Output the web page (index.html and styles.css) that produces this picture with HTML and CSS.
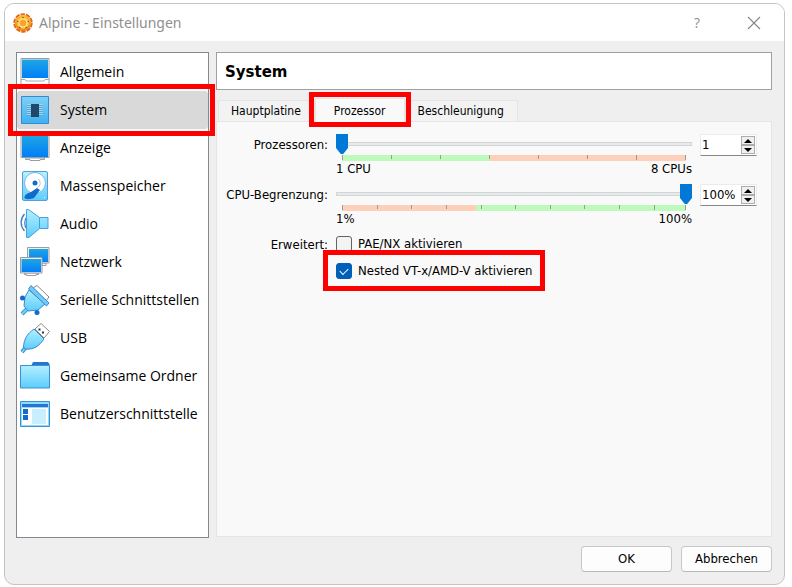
FILE: index.html
```html
<!DOCTYPE html>
<html lang="de">
<head>
<meta charset="utf-8">
<meta name="viewport" content="width=device-width, initial-scale=1">
<title>Alpine - Einstellungen</title>
<link rel="stylesheet" href="styles.css">
</head>
<body>
<svg class="defs" width="0" height="0" aria-hidden="true">
  <defs>
    <linearGradient id="screen" x1="0" y1="0" x2="0" y2="1"><stop offset="0" stop-color="#20a5e2"/><stop offset="1" stop-color="#007ffb"/></linearGradient>
    <linearGradient id="ice" x1="0" y1="0" x2="0" y2="1"><stop offset="0" stop-color="#b2f0ff"/><stop offset="1" stop-color="#5dccfd"/></linearGradient>
    <linearGradient id="sky" x1="0" y1="0" x2="0" y2="1"><stop offset="0" stop-color="#7fd0f5"/><stop offset="1" stop-color="#3eb0f2"/></linearGradient>
    <linearGradient id="sun" x1="0" y1="0" x2="0" y2="1"><stop offset="0" stop-color="#ffbd3c"/><stop offset="1" stop-color="#f07d14"/></linearGradient>
  </defs>
</svg>
<main class="window">
  <header class="titlebar">
    <svg class="app-icon" viewBox="0 0 20 20" aria-hidden="true">
      <circle cx="10" cy="10" r="8.200" fill="none" stroke="#d9641a" stroke-width="3" stroke-dasharray="4.150 1"/>
      <circle cx="10" cy="10" r="8.300" fill="url(#sun)"/>
      <circle cx="10" cy="10" r="5.800" fill="#ffce58"/>
      <circle cx="10" cy="10" r="4" fill="#f9a52e" stroke="#ffe795"/>
      <g fill="#a04a14"><circle cx="10" cy="4.500" r=".8"/><circle cx="15.300" cy="8.500" r=".8"/><circle cx="13.300" cy="14.500" r=".8"/><circle cx="6.700" cy="14.500" r=".8"/><circle cx="4.700" cy="8.500" r=".8"/></g>
    </svg>
    <h1 class="title">Alpine - Einstellungen</h1>
    <button class="title-button help" type="button" aria-label="Hilfe">?</button>
    <button class="title-button" type="button" aria-label="Schließen">
      <svg width="14" height="14" viewBox="0 0 14 14"><path d="M1 1l12 12M13 1L1 13" stroke="#858585" stroke-width="1.1"/></svg>
    </button>
  </header>

  <div class="content">
    <nav class="sidebar" aria-label="Kategorien">
      <a class="item" href="#allgemein">
        <svg class="icon" viewBox="0 0 30 32"><path d="M1 31V2.500H29V31" fill="#fff" stroke="#999ca1"/><path d="M2 3.500H28V22H2z" fill="url(#screen)"/><path d="M1 23.500H5L6 25H24L25 23.500H29" fill="none" stroke="#aaa"/></svg>
        Allgemein</a>
      <a class="item selected marked" href="#system" aria-current="page">
        <svg class="icon" viewBox="0 0 30 32"><path d="M1.500 2.500H28.500V29.500H1.500z" fill="url(#sky)" stroke="#318bd8"/><path d="M7 10.500H23M7 12.500H23M7 14.500H23M7 16.500H23M7 18.500H23M7 20.500H23" stroke="#9bd9f8"/><path d="M7 11.500H23M7 13.500H23M7 15.500H23M7 17.500H23M7 19.500H23M7 21.500H23" stroke="#5da5d0"/><path d="M11 10H19V23H11z" fill="#23476a"/></svg>
        System</a>
      <a class="item" href="#anzeige">
        <svg class="icon" viewBox="0 0 30 32"><path d="M5.500 26V27.500H10V28.500H20V27.500H24.500V26z" fill="#fff" stroke="#999ca1"/><path d="M1 2.500H29V25.500H1z" fill="#eee" stroke="#999ca1"/><path d="M2 3.500H28V25H2z" fill="url(#screen)"/></svg>
        Anzeige</a>
      <a class="item" href="#massenspeicher">
        <svg class="icon" viewBox="0 0 30 32"><rect x="2.500" y="1.500" width="25" height="29" rx="1.500" fill="url(#ice)" stroke="#559ed8"/><circle cx="15" cy="13" r="10.500" fill="#fff" stroke="#7ebbe5"/><path d="M17 18L20 20L14 28C11 29 6 30 4.500 28C4 25 8 23 11 22z" fill="#126bcb"/><path d="M17 18C21 16 21 11 18 9" fill="none" stroke="#a9c7da"/><circle cx="15" cy="13" r="2.500" fill="#126bcb"/><path d="M5 3.500l1 1M25 3.500l-1 1M24 27l1 1" stroke="#fff"/></svg>
        Massenspeicher</a>
      <a class="item" href="#audio">
        <svg class="icon" viewBox="0 0 30 32"><path d="M4.500 6C0 11 0 18 4.500 23M7 9C4 12 4 18 7 21" fill="none" stroke="#3d7fc6" stroke-width="1.300"/><path d="M6.500 1.500H8.500L19.500 9.500H28V20.500H19.500L9 29.500H6.500z" fill="url(#ice)" stroke="#4c9cde"/><path d="M19.500 9.500V20.500" stroke="#4c9cde"/></svg>
        Audio</a>
      <a class="item" href="#netzwerk">
        <svg class="icon" viewBox="0 0 30 32"><path d="M22 19.500H26V17H22z" fill="#fff" stroke="#999ca1"/><path d="M7.500 1.500H29V17H7.500z" fill="#eee" stroke="#999ca1"/><path d="M9 3H28V16H9z" fill="url(#screen)"/><path d="M4.500 27V28.500H6.500V29.500H16V28.500H18.500V27z" fill="#fff" stroke="#999ca1"/><path d="M.500 11.500H22V27H.500z" fill="#eee" stroke="#999ca1"/><path d="M1.500 13H21V26H1.500z" fill="url(#screen)"/></svg>
        Netzwerk</a>
      <a class="item" href="#seriell">
        <svg class="icon" viewBox="0 0 30 32"><path d="M13 4L17 1.500L29 13L26 17z" fill="#fff" stroke="#888"/><path d="M2 30L7 25" stroke="#3a95d7" stroke-width="4"/><path d="M2 30L7 25" stroke="#70d4fb" stroke-width="2"/><path d="M9 6L25 20L18 26L8 27L4 22L5 13z" fill="url(#ice)" stroke="#398bd2"/><path d="M11 1.500L29 19L26.500 22L8.500 5z" fill="#70ccf7" stroke="#398bd2"/><circle cx="2.500" cy="14" r="2.500" fill="#126bcb"/><circle cx="17" cy="28.500" r="2.500" fill="#126bcb"/></svg>
        Serielle Schnittstellen</a>
      <a class="item" href="#usb">
        <svg class="icon" viewBox="0 0 30 32"><path d="M15 7L21 1.500L29.500 9.500L24 16z" fill="#fff" stroke="#888"/><path d="M18.500 6.500h2v2h-2zM22 9.500h2v2h-2z" fill="#333"/><path d="M2 30L6 25" stroke="#398bd2" stroke-width="4"/><path d="M2 30L6 25" stroke="#70d4fb" stroke-width="2"/><path d="M14 7L24 17C19 24 14 28 5 27L3.500 25C4 17 7 12 14 7z" fill="url(#ice)" stroke="#398bd2"/></svg>
        USB</a>
      <a class="item" href="#ordner">
        <svg class="icon" viewBox="0 0 30 32"><path d="M11 6L13 2H28L29.500 4V8H11z" fill="#2874d2"/><path d="M.500 5.500H29.500V28H.500z" fill="url(#ice)" stroke="#3a91d2"/></svg>
        Gemeinsame Ordner</a>
      <a class="item" href="#oberflaeche">
        <svg class="icon" viewBox="0 0 30 32"><path d="M.500 3.500H29.500V28.500H.500z" fill="#8edbfa" stroke="#3a91d2"/><path d="M2 6H28V9H2z" fill="#2874d2"/><path d="M2 10H28V27H2z" fill="#fff"/><path d="M3 11H8V16H3zM3 17H8V22H3z" fill="#126bcb"/><path d="M12 11H26V26H12z" fill="#c7efff"/></svg>
        Benutzerschnittstelle</a>
    </nav>

    <section class="page">
      <h2 class="page-title">System</h2>
      <div class="tabs" role="tablist">
        <button class="tab" type="button" role="tab">Hauptplatine</button>
        <button class="tab active marked" type="button" role="tab" aria-selected="true">Prozessor</button>
        <button class="tab" type="button" role="tab">Beschleunigung</button>
      </div>
      <form class="panel" id="settings">
        <label class="label" for="cpus">Prozessoren:</label>
        <div class="slider">
          <input class="range" id="cpus" type="range" min="1" max="8" value="1">
          <div class="scale cpu-scale"><i></i><i></i><i></i><i></i><i></i><i></i><i></i></div>
          <div class="limits"><span>1 CPU</span><span>8 CPUs</span></div>
        </div>
        <div class="spin">
          <input class="spin-text" type="text" value="1" aria-label="Anzahl Prozessoren">
          <div class="steps">
            <button class="step" type="button" aria-label="Mehr Prozessoren"><svg width="8" height="4" viewBox="0 0 8 4"><path d="M0 4L4 0L8 4z"/></svg></button>
            <button class="step" type="button" aria-label="Weniger Prozessoren"><svg width="8" height="4" viewBox="0 0 8 4"><path d="M0 0L4 4L8 0z"/></svg></button>
          </div>
        </div>

        <label class="label" for="cap">CPU-Begrenzung:</label>
        <div class="slider">
          <input class="range" id="cap" type="range" min="1" max="100" value="100">
          <div class="scale cap-scale"><i></i><i></i><i></i><i></i><i></i><i></i><i></i><i></i><i></i><i class="short"></i></div>
          <div class="limits"><span>1%</span><span>100%</span></div>
        </div>
        <div class="spin">
          <input class="spin-text" type="text" value="100%" aria-label="CPU-Begrenzung in Prozent">
          <div class="steps">
            <button class="step" type="button" aria-label="Begrenzung erhöhen"><svg width="8" height="4" viewBox="0 0 8 4"><path d="M0 4L4 0L8 4z"/></svg></button>
            <button class="step" type="button" aria-label="Begrenzung senken"><svg width="8" height="4" viewBox="0 0 8 4"><path d="M0 0L4 4L8 0z"/></svg></button>
          </div>
        </div>

        <span class="label">Erweitert:</span>
        <div class="checks">
          <label class="check"><input class="box" type="checkbox">PAE/NX aktivieren</label>
          <label class="check marked"><input class="box" type="checkbox" checked>Nested VT-x/AMD-V aktivieren</label>
        </div>
      </form>
    </section>
  </div>

  <footer class="footer">
    <button class="button" type="submit" form="settings">OK</button>
    <button class="button" type="button">Abbrechen</button>
  </footer>
</main>
</body>
</html>
```
FILE: styles.css
```css
* { box-sizing: border-box; }

body {
  margin: 0;
  padding: 3px 7px 2px 4px;
  min-height: 100vh;
  display: flex;
  background: #fff;
  color: #000;
  font: 13px/16px "DejaVu Sans Condensed", "DejaVu Sans", sans-serif;
}

button, input { font: inherit; color: inherit; margin: 0; }

.defs { position: absolute; }

.window {
  flex: 1;
  display: flex;
  flex-direction: column;
  border: 1px solid #c4c4c4;
  border-radius: 10px;
  background: #efefef;
  overflow: hidden;
}

.titlebar {
  display: flex;
  align-items: center;
  height: 37px;
  padding: 0 9px 0 8px;
  background: #fff;
}

.app-icon { width: 20px; height: 20px; margin-right: 6px; }

.title {
  flex: 1;
  margin: 0;
  font: 14px/20px "Noto Sans", "Open Sans", sans-serif;
  color: #8f8f8f;
}

.title-button {
  display: flex;
  align-items: center;
  justify-content: center;
  width: 42px;
  height: 32px;
  padding: 0;
  border: 0;
  background: none;
}

.help {
  margin-right: 15px;
  font: 14px/20px "Open Sans", sans-serif;
  color: #8f8f8f;
}

.content {
  flex: 1;
  display: flex;
  gap: 7px;
  padding: 11px 12px 0 11px;
}

.sidebar {
  width: 193px;
  border: 1px solid #828790;
  background: #fff;
}

.item {
  position: relative;
  display: flex;
  align-items: center;
  gap: 10px;
  height: 38px;
  padding-left: 3px;
  color: #000;
  font: 14px/20px "Open Sans", "Noto Sans", sans-serif;
  text-decoration: none;
  white-space: nowrap;
}

.selected { background: #d9d9d9; border-radius: 3px; }

.icon { width: 30px; height: 32px; }

/* Callout frames around the steps to follow */
.marked { position: relative; z-index: 1; }

.marked::after {
  content: "";
  position: absolute;
  inset: -7px -7px -7px -9px;
  border: 5px solid #f00;
  pointer-events: none;
}

.page {
  flex: 1;
  display: flex;
  flex-direction: column;
  padding-bottom: 1px;
}

.page-title {
  margin: 0 0 8px;
  padding: 9px 8px 7px;
  border: 1px solid #a0a0a0;
  background: #fff;
  font: bold 15px/20px "DejaVu Sans", sans-serif;
}

.tabs {
  display: flex;
  align-items: flex-end;
  height: 23px;
  padding-left: 2px;
  font-size: 12px;
}

.tab {
  height: 21px;
  padding: 0 13px 0 12px;
  border: 1px solid #e5e5e5;
  border-bottom: 0;
  background: #f3f3f3;
}

.tab.active {
  height: 24px;
  margin-bottom: -1px;
  padding: 0 18px;
  background: #f9f9f9;
}

.tab.marked::after { inset: -7px -7px -5px; }

.panel {
  flex: 1;
  display: grid;
  grid-template-columns: 102px 1fr 57px;
  grid-auto-rows: max-content;
  column-gap: 8px;
  row-gap: 5px;
  padding: 12px 14px 12px 9px;
  border: 1px solid #e5e5e5;
  background: #f9f9f9;
}

.label { padding-top: 3px; text-align: right; white-space: nowrap; }

.slider { display: flex; flex-direction: column; height: 45px; }

.range {
  appearance: none;
  width: 100%;
  height: 20px;
  background: linear-gradient(#e7eaea, #e7eaea) center / calc(100% - 2px) 2px no-repeat,
    linear-gradient(#d3d6d6, #d3d6d6) center / 100% 4px no-repeat;
}

.range::-webkit-slider-thumb {
  appearance: none;
  width: 12px;
  height: 20px;
  background: #0078d7;
  clip-path: polygon(0 0, 100% 0, 100% 70%, 60% 100%, 40% 100%, 0 70%);
}

.scale { display: flex; height: 6px; margin: 1px 6px 0; }

.scale i { flex: 10; height: 4px; border-left: 1px solid #a09a8c; }
.scale i:first-child { height: 5px; }
.scale i:last-child { border-right: 1px solid #a09a8c; height: 5px; }
.scale .short { flex: 9; }

.cpu-scale { background: linear-gradient(90deg, #bdfabb 43%, #fcd0ba 43%); }
.cap-scale { background: linear-gradient(90deg, #fcd0ba 39%, #bdfabb 39%); }

.limits { display: flex; justify-content: space-between; }

.spin {
  display: flex;
  height: 22px;
  padding: 1px;
  border: 1px solid #ececec;
  border-bottom-color: #868686;
  background: #fff;
}

.spin-text {
  flex: 1;
  min-width: 0;
  padding: 0;
  border: 0;
  background: none;
}

.steps { display: flex; flex-direction: column; width: 14px; }

.step {
  flex: 1;
  display: flex;
  align-items: center;
  justify-content: center;
  padding: 0;
  border: 1px solid #adadad;
  background: #f0f0f0;
}

.checks {
  grid-column: 2 / 4;
  display: flex;
  flex-direction: column;
  align-items: flex-start;
  gap: 11px;
  padding-top: 2px;
}

.check { display: flex; align-items: center; gap: 6px; }

.check.marked::after { inset: -13px -12px -12px -13px; }

.box {
  appearance: none;
  width: 16px;
  height: 16px;
  border: 1px solid #626262;
  border-radius: 3px;
  background: #f3f3f3;
}

.box:checked {
  border-color: #005fb8;
  background: #005fb8;
  display: grid;
  place-items: center;
}

.box:checked::before {
  content: "";
  width: 7px;
  height: 4px;
  margin-bottom: 2px;
  border: solid #fff;
  border-width: 0 0 1px 1px;
  transform: rotate(-45deg);
}

.footer {
  display: flex;
  justify-content: flex-end;
  gap: 9px;
  padding: 8px 12px 12px;
}

.button {
  width: 91px;
  height: 26px;
  padding: 0;
  border: 1px solid #c8c8c8;
  border-bottom-color: #b8b8b8;
  border-radius: 4px;
  background: #fdfdfd;
}
```
